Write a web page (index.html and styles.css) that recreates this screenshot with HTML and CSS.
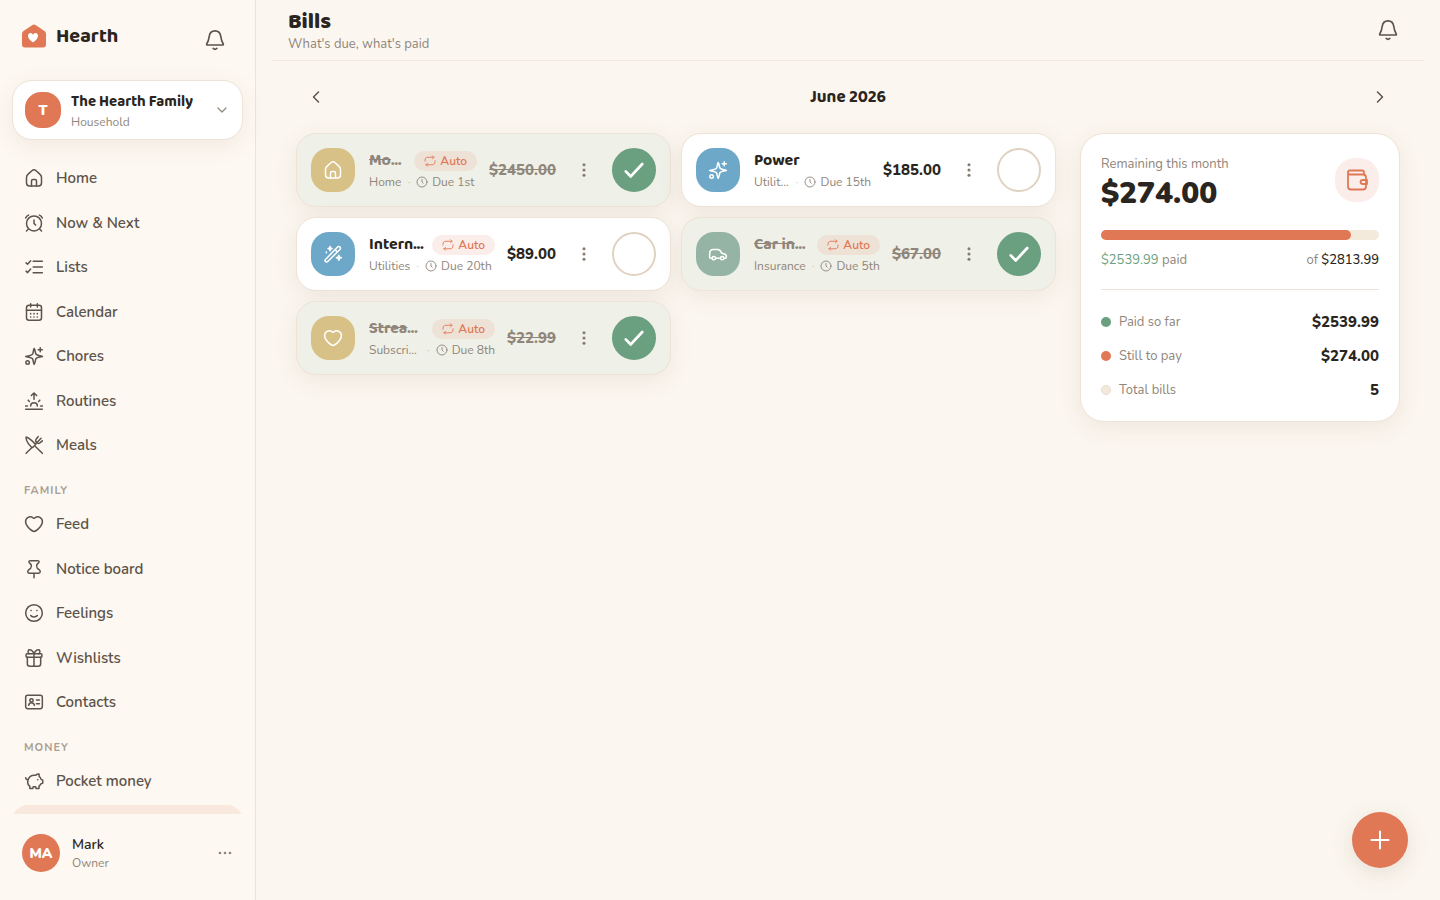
FILE: index.html
```html
<!DOCTYPE html>
<html lang="en">
<head>
<meta charset="utf-8">
<meta name="viewport" content="width=device-width, initial-scale=1">
<title>Bills</title>
<link rel="stylesheet" href="styles.css">
</head>
<body>
<svg class="sprite" aria-hidden="true">
  <symbol id="bell" viewBox="0 0 24 24"><path d="M3.600 17.500C3 17.500 2.700 16.800 3.100 16.100C4.900 13.500 5.200 11.500 5.700 8C6.200 4.200 8.400 2 12 2S17.800 4.200 18.300 8C18.800 11.500 19.100 13.500 20.900 16.100C21.300 16.800 21 17.500 20.400 17.500Z"/><path d="M10 21.200C11.200 22.300 12.800 22.300 14 21.200"/></symbol>
  <symbol id="home" viewBox="0 0 24 24"><path d="M3 11.500C3 9.500 3.500 8.700 5 7.400L9.500 3.300C11.300 1.700 12.700 1.700 14.500 3.300L19 7.400C20.500 8.700 21 9.500 21 11.500V18C21 20.700 20.200 21.500 17.500 21.500H6.500C3.800 21.500 3 20.700 3 18Z"/><path d="M9 21.500V15.500C9 14.200 9.500 13.700 10.800 13.700H13.200C14.500 13.700 15 14.200 15 15.500V21.500"/></symbol>
  <symbol id="alarm" viewBox="0 0 24 24"><circle cx="12" cy="12.500" r="9"/><path d="M12 8.500V12.500L14 14.500M5 19.500L3 21.500M19 19.500L21 21.500M2 6C2.600 4.300 3.800 3.100 5.500 2.500M22 6C21.400 4.300 20.200 3.100 18.500 2.500"/></symbol>
  <symbol id="list" viewBox="0 0 24 24"><path d="M11 5H22M11 12H22M11 19H22M2.500 7L4.300 8.700L8 4.500M2.500 17L4.300 18.700L8 14.500"/></symbol>
  <symbol id="calendar" viewBox="0 0 24 24"><rect x="3" y="4" width="18" height="18" rx="3"/><path d="M3 10H21M8 2V6M16 2V6"/><path d="M8 14H8.010M12 14H12.010M16 14H16.010M8 18H8.010M12 18H12.010M16 18H16.010" stroke-width="2"/></symbol>
  <symbol id="sparkles" viewBox="0 0 24 24"><path d="M2 12.500C6.500 12 9.500 11 10.500 9.500C11.300 8 11 4.500 12.200 3C13.500 4.500 13.500 8.500 14.500 10C15.800 11.500 19 11.500 22 12.500C19 13.500 16 13.500 14.500 15C13.500 16.500 13.500 20 12.200 22C11 20 11 16.500 10 15C8.800 13.700 5 13.500 2 12.500Z"/><path d="M19.500 2V7M17 4.500H22"/><circle cx="4.300" cy="19.700" r="2.100"/></symbol>
  <symbol id="sunrise" viewBox="0 0 24 24"><path d="M2 22H22M2 18H4M20 18H22M8 18C8 15.500 9.600 14 12 14S16 15.500 16 18M5 11L6.500 12.500M19 11L17.500 12.500M12 10V2.500M8.800 5.500L12 2.300L15.200 5.500"/></symbol>
  <symbol id="meals" viewBox="0 0 24 24"><path d="M2.500 2.500C6 3 12.500 9.500 14 11.500L10.500 15C7 14 2 7 2.500 2.500ZM14 14L22 22M2.500 22L9 15.500M13.500 11L20.500 4M17 2L14.500 5C13.500 6.500 14 8 15 9S17.500 10.500 19 9.500L22 7"/></symbol>
  <symbol id="heart" viewBox="0 0 24 24"><path d="M19.500 4.300C16.800 2.700 14.300 3.600 12.900 4.800C12.200 5.400 11.800 5.400 11.100 4.800C9.700 3.600 7.200 2.700 4.500 4.300C1 6.500 .2 12 7.500 18.500C11.200 21.700 12.800 21.700 16.500 18.500C23.800 12 23 6.500 19.500 4.300Z"/></symbol>
  <symbol id="pin" viewBox="0 0 24 24"><path d="M7.500 2H16.500C17.500 2 18.200 2.700 18 3.700C17.700 5 16.300 5.500 15.500 6.500C15 7.500 15.400 10 16 11C17 12.200 19.500 13.200 19.500 15C19.500 16.200 18.800 17 17.500 17H6.500C5.200 17 4.500 16.200 4.500 15C4.500 13.200 7 12.200 8 11C8.600 10 9 7.500 8.500 6.500C7.700 5.500 6.300 5 6 3.700C5.800 2.700 6.500 2 7.500 2ZM12 17V22.500"/></symbol>
  <symbol id="smile" viewBox="0 0 24 24"><circle cx="12" cy="12" r="10"/><path d="M8 15C9.500 17.200 14.500 17.200 16 15"/><path d="M8.500 9H8.510M15.500 9H15.510" stroke-width="2"/></symbol>
  <symbol id="gift" viewBox="0 0 24 24"><rect x="2.500" y="7" width="19" height="4" rx="1"/><path d="M4 11V19C4 21 5 22 7 22H17C19 22 20 21 20 19V11M12 7V22M12 7C10.500 3 8.500 2 6.700 2C5 2 4.500 4 5.300 5.500L6.200 7M12 7C13.500 3 15.500 2 17.300 2C19 2 19.500 4 18.700 5.500L17.800 7"/></symbol>
  <symbol id="contact" viewBox="0 0 24 24"><rect x="2" y="4" width="20" height="16" rx="2.500"/><path d="M15 9.500H18.500M15 14H18.500"/><circle cx="9" cy="10" r="2"/><path d="M5.500 16C6 13.800 7.500 13 9 13S12 13.800 12.500 16"/></symbol>
  <symbol id="piggy" viewBox="0 0 24 24"><path d="M2 8C2.200 10 3.300 10.500 5 10.300C6.200 6.500 9 5 12.500 5H14C15.500 3.500 16.800 3.500 18 3.500L18.200 6.500C19.500 7.500 20 8.500 20.500 10L22.500 11V14.500L20.300 15.500C19.800 16.500 19 17.300 18 18V21H14.500L14 19H11L10.500 21H7V18.500C5 17 3.800 14 5 10.300"/><path d="M16.500 10.500H16.510" stroke-width="2"/></symbol>
  <symbol id="down" viewBox="0 0 24 24"><path d="M6 9L12 15L18 9"/></symbol>
  <symbol id="left" viewBox="0 0 24 24"><path d="M15 6L9 12L15 18"/></symbol>
  <symbol id="right" viewBox="0 0 24 24"><path d="M9 6L15 12L9 18"/></symbol>
  <symbol id="repeat" viewBox="0 0 24 24"><path d="M17 1.500L20 4.500L17 7.500M20 4.500H8C4 4.500 2 6.500 2 10.500V12.500M7 16.500L4 19.500L7 22.500M4 19.500H16C20 19.500 22 17.500 22 13.500V11.500"/></symbol>
  <symbol id="clock" viewBox="0 0 24 24"><circle cx="12" cy="12" r="10"/><path d="M12 7V12L14.500 14.500"/></symbol>
  <symbol id="kebab" viewBox="0 0 24 24"><g fill="currentColor" stroke="none"><circle cx="12" cy="4" r="2.300"/><circle cx="12" cy="12" r="2.300"/><circle cx="12" cy="20" r="2.300"/></g></symbol>
  <symbol id="dots" viewBox="0 0 24 24"><g fill="currentColor" stroke="none"><circle cx="4.500" cy="12" r="2"/><circle cx="12" cy="12" r="2"/><circle cx="19.500" cy="12" r="2"/></g></symbol>
  <symbol id="check" viewBox="0 0 24 24"><path d="M3 13.500L8.500 19L21 5.500"/></symbol>
  <symbol id="plus" viewBox="0 0 24 24"><path d="M12 3.500V20.500M3.500 12H20.500"/></symbol>
  <symbol id="car" viewBox="0 0 24 24"><circle cx="7" cy="17" r="2"/><circle cx="17" cy="17" r="2"/><path d="M5 17H3.500C2.500 17 2 16.500 2 15.500V11.500C2 8 3.500 6.500 6.500 6.500H11.500C13.500 6.500 15 7.500 16.500 11L20 12C21.500 12.500 22 13.500 22 15V16C22 16.700 21.500 17 20.700 17H19M9 17H15"/></symbol>
  <symbol id="wand" viewBox="0 0 24 24"><path d="M3 18.500L17.500 3.700C18.300 2.900 19.500 2.900 20.300 3.700S21.100 5.700 20.300 6.500L5.700 21C4.900 21.800 3.700 21.800 3 21S2.200 19.300 3 18.500ZM14.500 6.700L17.300 9.500M8.500 3L9.200 4.800L11 5.500L9.200 6.200L8.500 8L7.800 6.200L6 5.500L7.800 4.800ZM4 9.500V10.500M19 13.500L19.800 15.700L22 16.500L19.800 17.300L19 19.500L18.200 17.300L16 16.500L18.200 15.700Z"/></symbol>
  <symbol id="wallet" viewBox="0 0 24 24"><path d="M3 4.500V18.500C3 20.700 4 21.500 6 21.500H18C20 21.500 21 20.700 21 18.500V9.500C21 7.500 20 6.500 18 6.500H5C3.800 6.500 3 5.800 3 4.500C3 3.300 3.800 2.500 5 2.500H17C18.300 2.500 19 3.200 19 4.500V6.500M22 12H18C14.700 12 14.700 16 18 16H22Z"/></symbol>
</svg>
<div class="app">
  <aside class="sidebar">
    <div class="brand">
      <svg class="logo" viewBox="0 0 24 24" aria-hidden="true"><path class="logo-house" d="M10.500 1Q12 0 13.500 1L22.500 7Q24 8 24 9.800V20.500Q24 23.500 21 23.500H3Q0 23.500 0 20.500V9.800Q0 8 1.500 7Z"/><path class="logo-heart" d="M11 18.500C8.500 16.800 6 14.500 6 12C6 8.700 9.500 8 11 10.700C12.500 8 16 8.700 16 12C16 14.500 13.500 16.800 11 18.500Z"/></svg>
      <span class="brand-name">Hearth</span>
      <button class="icon-btn" type="button" aria-label="Notifications"><svg class="icon icon-md"><use href="#bell"/></svg></button>
    </div>
    <button class="household" type="button">
      <span class="tile tile-household">T</span>
      <span class="household-text"><span class="household-name">The Hearth Family</span><span class="small">Household</span></span>
      <svg class="icon icon-sm"><use href="#down"/></svg>
    </button>
    <nav class="nav" aria-label="Main">
      <a class="nav-item" href="#"><svg class="icon"><use href="#home"/></svg>Home</a>
      <a class="nav-item" href="#"><svg class="icon"><use href="#alarm"/></svg>Now &amp; Next</a>
      <a class="nav-item" href="#"><svg class="icon"><use href="#list"/></svg>Lists</a>
      <a class="nav-item" href="#"><svg class="icon"><use href="#calendar"/></svg>Calendar</a>
      <a class="nav-item" href="#"><svg class="icon"><use href="#sparkles"/></svg>Chores</a>
      <a class="nav-item" href="#"><svg class="icon"><use href="#sunrise"/></svg>Routines</a>
      <a class="nav-item" href="#"><svg class="icon"><use href="#meals"/></svg>Meals</a>
      <h2 class="nav-label">FAMILY</h2>
      <a class="nav-item" href="#"><svg class="icon"><use href="#heart"/></svg>Feed</a>
      <a class="nav-item" href="#"><svg class="icon"><use href="#pin"/></svg>Notice board</a>
      <a class="nav-item" href="#"><svg class="icon"><use href="#smile"/></svg>Feelings</a>
      <a class="nav-item" href="#"><svg class="icon"><use href="#gift"/></svg>Wishlists</a>
      <a class="nav-item" href="#"><svg class="icon"><use href="#contact"/></svg>Contacts</a>
      <h2 class="nav-label">MONEY</h2>
      <a class="nav-item" href="#"><svg class="icon"><use href="#piggy"/></svg>Pocket money</a>
      <a class="nav-item active" href="#" aria-label="Bills" aria-current="page"><svg class="icon"><use href="#wallet"/></svg></a>
    </nav>
    <button class="user" type="button">
      <span class="avatar">MA</span>
      <span class="user-text"><span class="user-name">Mark</span><span class="small">Owner</span></span>
      <svg class="icon icon-sm"><use href="#dots"/></svg>
    </button>
  </aside>

  <main class="main">
    <header class="topbar">
      <div><h1 class="title">Bills</h1><p class="subtitle">What's due, what's paid</p></div>
      <button class="icon-btn" type="button" aria-label="Notifications"><svg class="icon icon-md"><use href="#bell"/></svg></button>
    </header>
    <div class="content">
      <div class="month">
        <button class="icon-btn" type="button" aria-label="Previous month"><svg class="icon"><use href="#left"/></svg></button>
        <h2 class="month-name">June 2026</h2>
        <button class="icon-btn" type="button" aria-label="Next month"><svg class="icon"><use href="#right"/></svg></button>
      </div>
      <div class="columns">
        <section class="bills" aria-label="Bills">
          <article class="bill paid">
            <span class="tile gold"><svg class="icon"><use href="#home"/></svg></span>
            <div class="bill-text">
              <div class="bill-head"><h3 class="bill-name">Mortgage</h3><span class="badge"><svg class="icon icon-xs"><use href="#repeat"/></svg>Auto</span></div>
              <div class="bill-meta"><span class="category">Home</span><span class="sep">·</span><span class="due"><svg class="icon icon-xs"><use href="#clock"/></svg>Due 1st</span></div>
            </div>
            <span class="price">$2450.00</span>
            <button class="more" type="button" aria-label="More options"><svg class="icon icon-sm"><use href="#kebab"/></svg></button>
            <button class="toggle" type="button" aria-label="Mark unpaid"><svg class="icon"><use href="#check"/></svg></button>
          </article>
          <article class="bill">
            <span class="tile blue"><svg class="icon"><use href="#sparkles"/></svg></span>
            <div class="bill-text">
              <div class="bill-head"><h3 class="bill-name">Power</h3></div>
              <div class="bill-meta"><span class="category">Utilities</span><span class="sep">·</span><span class="due"><svg class="icon icon-xs"><use href="#clock"/></svg>Due 15th</span></div>
            </div>
            <span class="price">$185.00</span>
            <button class="more" type="button" aria-label="More options"><svg class="icon icon-sm"><use href="#kebab"/></svg></button>
            <button class="toggle" type="button" aria-label="Mark paid"></button>
          </article>
          <article class="bill">
            <span class="tile blue"><svg class="icon"><use href="#wand"/></svg></span>
            <div class="bill-text">
              <div class="bill-head"><h3 class="bill-name">Internet</h3><span class="badge"><svg class="icon icon-xs"><use href="#repeat"/></svg>Auto</span></div>
              <div class="bill-meta"><span class="category">Utilities</span><span class="sep">·</span><span class="due"><svg class="icon icon-xs"><use href="#clock"/></svg>Due 20th</span></div>
            </div>
            <span class="price">$89.00</span>
            <button class="more" type="button" aria-label="More options"><svg class="icon icon-sm"><use href="#kebab"/></svg></button>
            <button class="toggle" type="button" aria-label="Mark paid"></button>
          </article>
          <article class="bill paid">
            <span class="tile green"><svg class="icon"><use href="#car"/></svg></span>
            <div class="bill-text">
              <div class="bill-head"><h3 class="bill-name">Car insurance</h3><span class="badge"><svg class="icon icon-xs"><use href="#repeat"/></svg>Auto</span></div>
              <div class="bill-meta"><span class="category">Insurance</span><span class="sep">·</span><span class="due"><svg class="icon icon-xs"><use href="#clock"/></svg>Due 5th</span></div>
            </div>
            <span class="price">$67.00</span>
            <button class="more" type="button" aria-label="More options"><svg class="icon icon-sm"><use href="#kebab"/></svg></button>
            <button class="toggle" type="button" aria-label="Mark unpaid"><svg class="icon"><use href="#check"/></svg></button>
          </article>
          <article class="bill paid">
            <span class="tile gold"><svg class="icon"><use href="#heart"/></svg></span>
            <div class="bill-text">
              <div class="bill-head"><h3 class="bill-name">Streaming</h3><span class="badge"><svg class="icon icon-xs"><use href="#repeat"/></svg>Auto</span></div>
              <div class="bill-meta"><span class="category">Subscriptions</span><span class="sep">·</span><span class="due"><svg class="icon icon-xs"><use href="#clock"/></svg>Due 8th</span></div>
            </div>
            <span class="price">$22.99</span>
            <button class="more" type="button" aria-label="More options"><svg class="icon icon-sm"><use href="#kebab"/></svg></button>
            <button class="toggle" type="button" aria-label="Mark unpaid"><svg class="icon"><use href="#check"/></svg></button>
          </article>
        </section>
        <section class="summary" aria-label="Summary">
          <div class="summary-head">
            <div><p class="summary-label">Remaining this month</p><p class="amount">$274.00</p></div>
            <span class="tile tile-wallet"><svg class="icon icon-lg"><use href="#wallet"/></svg></span>
          </div>
          <div class="bar"><div class="bar-fill" style="width:90%"></div></div>
          <div class="split"><span><span class="green-text">$2539.99</span> paid</span><span>of <span class="dark-text">$2813.99</span></span></div>
          <dl class="stats">
            <div class="stat"><dt><span class="dot dot-green"></span>Paid so far</dt><dd>$2539.99</dd></div>
            <div class="stat"><dt><span class="dot dot-orange"></span>Still to pay</dt><dd>$274.00</dd></div>
            <div class="stat"><dt><span class="dot dot-cream"></span>Total bills</dt><dd>5</dd></div>
          </dl>
        </section>
      </div>
    </div>
  </main>
</div>
<button class="fab" type="button" aria-label="Add bill"><svg class="icon icon-lg"><use href="#plus"/></svg></button>
</body>
</html>
```
FILE: styles.css
```css
:root {
  --bg: #fbf6ef;
  --ink: #2a2520;
  --body: #5c534a;
  --muted: #8f857a;
  --line: #ede3d6;
  --orange: #e07856;
  --green: #6a9f80;
  --shadow: 0 6px 24px rgba(90, 70, 45, 0.08);
  --display: "Baloo 2", Nunito, Lato, sans-serif;
}
* { box-sizing: border-box; }
body, h1, h2, h3, p, dl, dd { margin: 0; }
body {
  background: var(--bg);
  color: var(--ink);
  font-family: Nunito, Lato, sans-serif;
  font-size: 15px;
  line-height: 1.5;
}
button {
  border: 0;
  padding: 0;
  background: none;
  color: inherit;
  font: inherit;
  text-align: left;
  cursor: pointer;
}
.sprite { position: absolute; width: 0; height: 0; }
.icon {
  display: block;
  flex: none;
  width: 20px;
  height: 20px;
  fill: none;
  stroke: currentColor;
  stroke-width: 1.8;
  stroke-linecap: round;
  stroke-linejoin: round;
}
.icon-xs { width: 12px; height: 12px; }
.icon-sm { width: 16px; height: 16px; }
.icon-md { width: 22px; height: 22px; }
.icon-lg { width: 24px; height: 24px; }
.small { color: var(--muted); font-size: 12px; line-height: 18px; }

.app { display: flex; height: 100vh; }
.sidebar {
  display: flex;
  flex: none;
  flex-direction: column;
  width: 256px;
  padding: 20px 12px 18px;
  border-right: 1px solid var(--line);
  background: #fdf8f1;
}
.brand { display: flex; align-items: center; gap: 10px; height: 40px; margin-bottom: 20px; padding: 0 8px 0 10px; }
.logo { width: 24px; height: 24px; margin-bottom: 8px; }
.logo-house { fill: var(--orange); }
.logo-heart { fill: #fff; }
.brand-name { flex: 1; margin-bottom: 8px; font-family: var(--display); font-size: 20px; font-weight: 700; line-height: 28px; }
.icon-btn { display: grid; flex: none; place-items: center; width: 40px; height: 40px; color: var(--body); }
.household {
  display: flex;
  align-items: center;
  gap: 10px;
  height: 60px;
  margin-bottom: 17px;
  padding: 0 12px;
  border: 1px solid var(--line);
  border-radius: 20px;
  background: #fff;
  box-shadow: var(--shadow);
}
.household .icon, .user .icon { color: var(--muted); }
.tile {
  display: grid;
  flex: none;
  place-items: center;
  width: 44px;
  height: 44px;
  border-radius: 18px;
  color: #fff;
}
.tile-household { width: 36px; height: 36px; border-radius: 16px; background: var(--orange); font-size: 14px; font-weight: 900; }
.household-text, .user-text { display: flex; flex: 1; flex-direction: column; min-width: 0; padding-top: 2px; }
.household-name { font-family: var(--display); font-size: 15px; font-weight: 700; line-height: 22px; white-space: nowrap; }
.nav { display: flex; flex: 1; flex-direction: column; gap: 2px; min-height: 0; overflow: hidden; }
.nav-item {
  display: flex;
  flex: none;
  align-items: center;
  gap: 12px;
  padding: 10px 12px;
  border-radius: 16px;
  color: var(--body);
  font-size: 15px;
  font-weight: 600;
  text-decoration: none;
}
.nav-item.active { height: 42px; background: #f9e8de; color: var(--orange); }
.nav-label { padding: 14px 12px 2px; color: #a89e93; font-size: 11px; font-weight: 700; letter-spacing: 1px; }
.user { display: flex; flex: none; align-items: center; gap: 12px; margin-top: 10px; padding: 10px; }
.avatar {
  display: grid;
  place-items: center;
  width: 38px;
  height: 38px;
  border-radius: 50%;
  background: var(--orange);
  color: #fff;
  font-size: 14px;
  font-weight: 900;
}
.user-name { font-size: 14px; font-weight: 600; line-height: 18px; }

.main { flex: 1; min-width: 0; padding: 0 16px; }
.topbar {
  display: flex;
  align-items: center;
  justify-content: space-between;
  height: 61px;
  padding: 0 16px;
  border-bottom: 1px solid #f3e9df;
  background: #fbf7f0;
}
.title { font-family: var(--display); font-size: 22px; font-weight: 800; line-height: 28px; }
.subtitle { color: var(--muted); font-size: 13px; line-height: 16px; }
.content { padding: 16px 24px; }
.month { display: flex; align-items: center; justify-content: space-between; margin-bottom: 16px; }
.month-name { padding-top: 2px; font-family: var(--display); font-size: 17px; font-weight: 700; line-height: 24px; }
.columns { display: grid; grid-template-columns: minmax(0, 1fr) 320px; align-items: start; gap: 24px; }
.bills { display: grid; grid-template-columns: repeat(2, minmax(0, 1fr)); gap: 10px; }
.bill {
  display: flex;
  align-items: center;
  gap: 12px;
  padding: 14px;
  border: 1px solid var(--line);
  border-radius: 20px;
  background: #fff;
  box-shadow: var(--shadow);
}
.bill.paid { background: #eff0e7; }
.gold { background: #d8c186; }
.blue { background: #6ea8c8; }
.green { background: #96b4a5; }
.bill-text { flex: 1; min-width: 0; padding: 2px 0 0 2px; }
.bill-head { display: flex; align-items: center; gap: 8px; height: 22px; }
.bill-name { overflow: hidden; min-width: 0; flex: 1; font-family: var(--display); font-size: 16px; font-weight: 700; line-height: 22px; text-overflow: ellipsis; white-space: nowrap; }
.badge {
  display: flex;
  flex: none;
  align-items: center;
  gap: 4px;
  height: 20px;
  padding: 0 10px;
  border-radius: 10px;
  background: #fbeeea;
  color: var(--orange);
  font-size: 12px;
  font-weight: 600;
}
.paid .badge { background: #eee2d7; }
.bill-meta { display: flex; align-items: center; gap: 6px; height: 20px; color: var(--muted); font-size: 12px; line-height: 18px; }
.category { overflow: hidden; min-width: 0; text-overflow: ellipsis; white-space: nowrap; }
.sep { color: #d8cfc3; }
.due { display: flex; flex: none; align-items: center; gap: 4px; }
.price, .stat dd { font-size: 15px; font-weight: 800; line-height: 22px; }
.paid .bill-name, .paid .price { color: var(--muted); text-decoration: line-through; }
.more { display: grid; flex: none; place-items: center; width: 32px; height: 32px; color: #857b70; }
.toggle {
  display: grid;
  flex: none;
  place-items: center;
  width: 44px;
  height: 44px;
  border: 2px solid #e0d2c0;
  border-radius: 50%;
  color: #fff;
}
.paid .toggle { border-color: var(--green); background: var(--green); }
.toggle .icon { width: 22px; height: 22px; stroke-width: 3; }

.summary { padding: 20px; border: 1px solid var(--line); border-radius: 24px; background: #fff; box-shadow: var(--shadow); }
.summary-head { display: flex; align-items: flex-start; justify-content: space-between; margin-bottom: 16px; }
.summary-label { color: var(--muted); font-size: 13px; line-height: 20px; }
.amount { font-size: 30px; font-weight: 900; line-height: 40px; }
.tile-wallet { margin-top: 4px; border-radius: 20px; background: #fbeeea; color: var(--orange); }
.bar { height: 10px; border-radius: 5px; background: #f3eadc; }
.bar-fill { height: 10px; border-radius: 5px; background: var(--orange); }
.split { display: flex; justify-content: space-between; padding: 10px 0 19px; border-bottom: 1px solid var(--line); color: var(--muted); font-size: 13px; line-height: 20px; }
.green-text { color: var(--green); }
.dark-text { color: var(--ink); font-weight: 500; }
.stats { display: grid; gap: 12px; padding-top: 21px; }
.stat { display: flex; align-items: center; justify-content: space-between; }
.stat dt { display: flex; align-items: center; gap: 8px; color: var(--muted); font-size: 13px; line-height: 22px; }
.dot { width: 10px; height: 10px; border-radius: 50%; }
.dot-green { background: var(--green); }
.dot-orange { background: var(--orange); }
.dot-cream { border: 1px solid #e8dccb; background: #f3eadc; }
.fab {
  position: fixed;
  right: 32px;
  bottom: 32px;
  display: grid;
  place-items: center;
  width: 56px;
  height: 56px;
  border-radius: 50%;
  background: var(--orange);
  box-shadow: 0 6px 24px rgba(70, 65, 45, 0.12);
  color: #fff;
}
.fab .icon { stroke-width: 2; }
```
